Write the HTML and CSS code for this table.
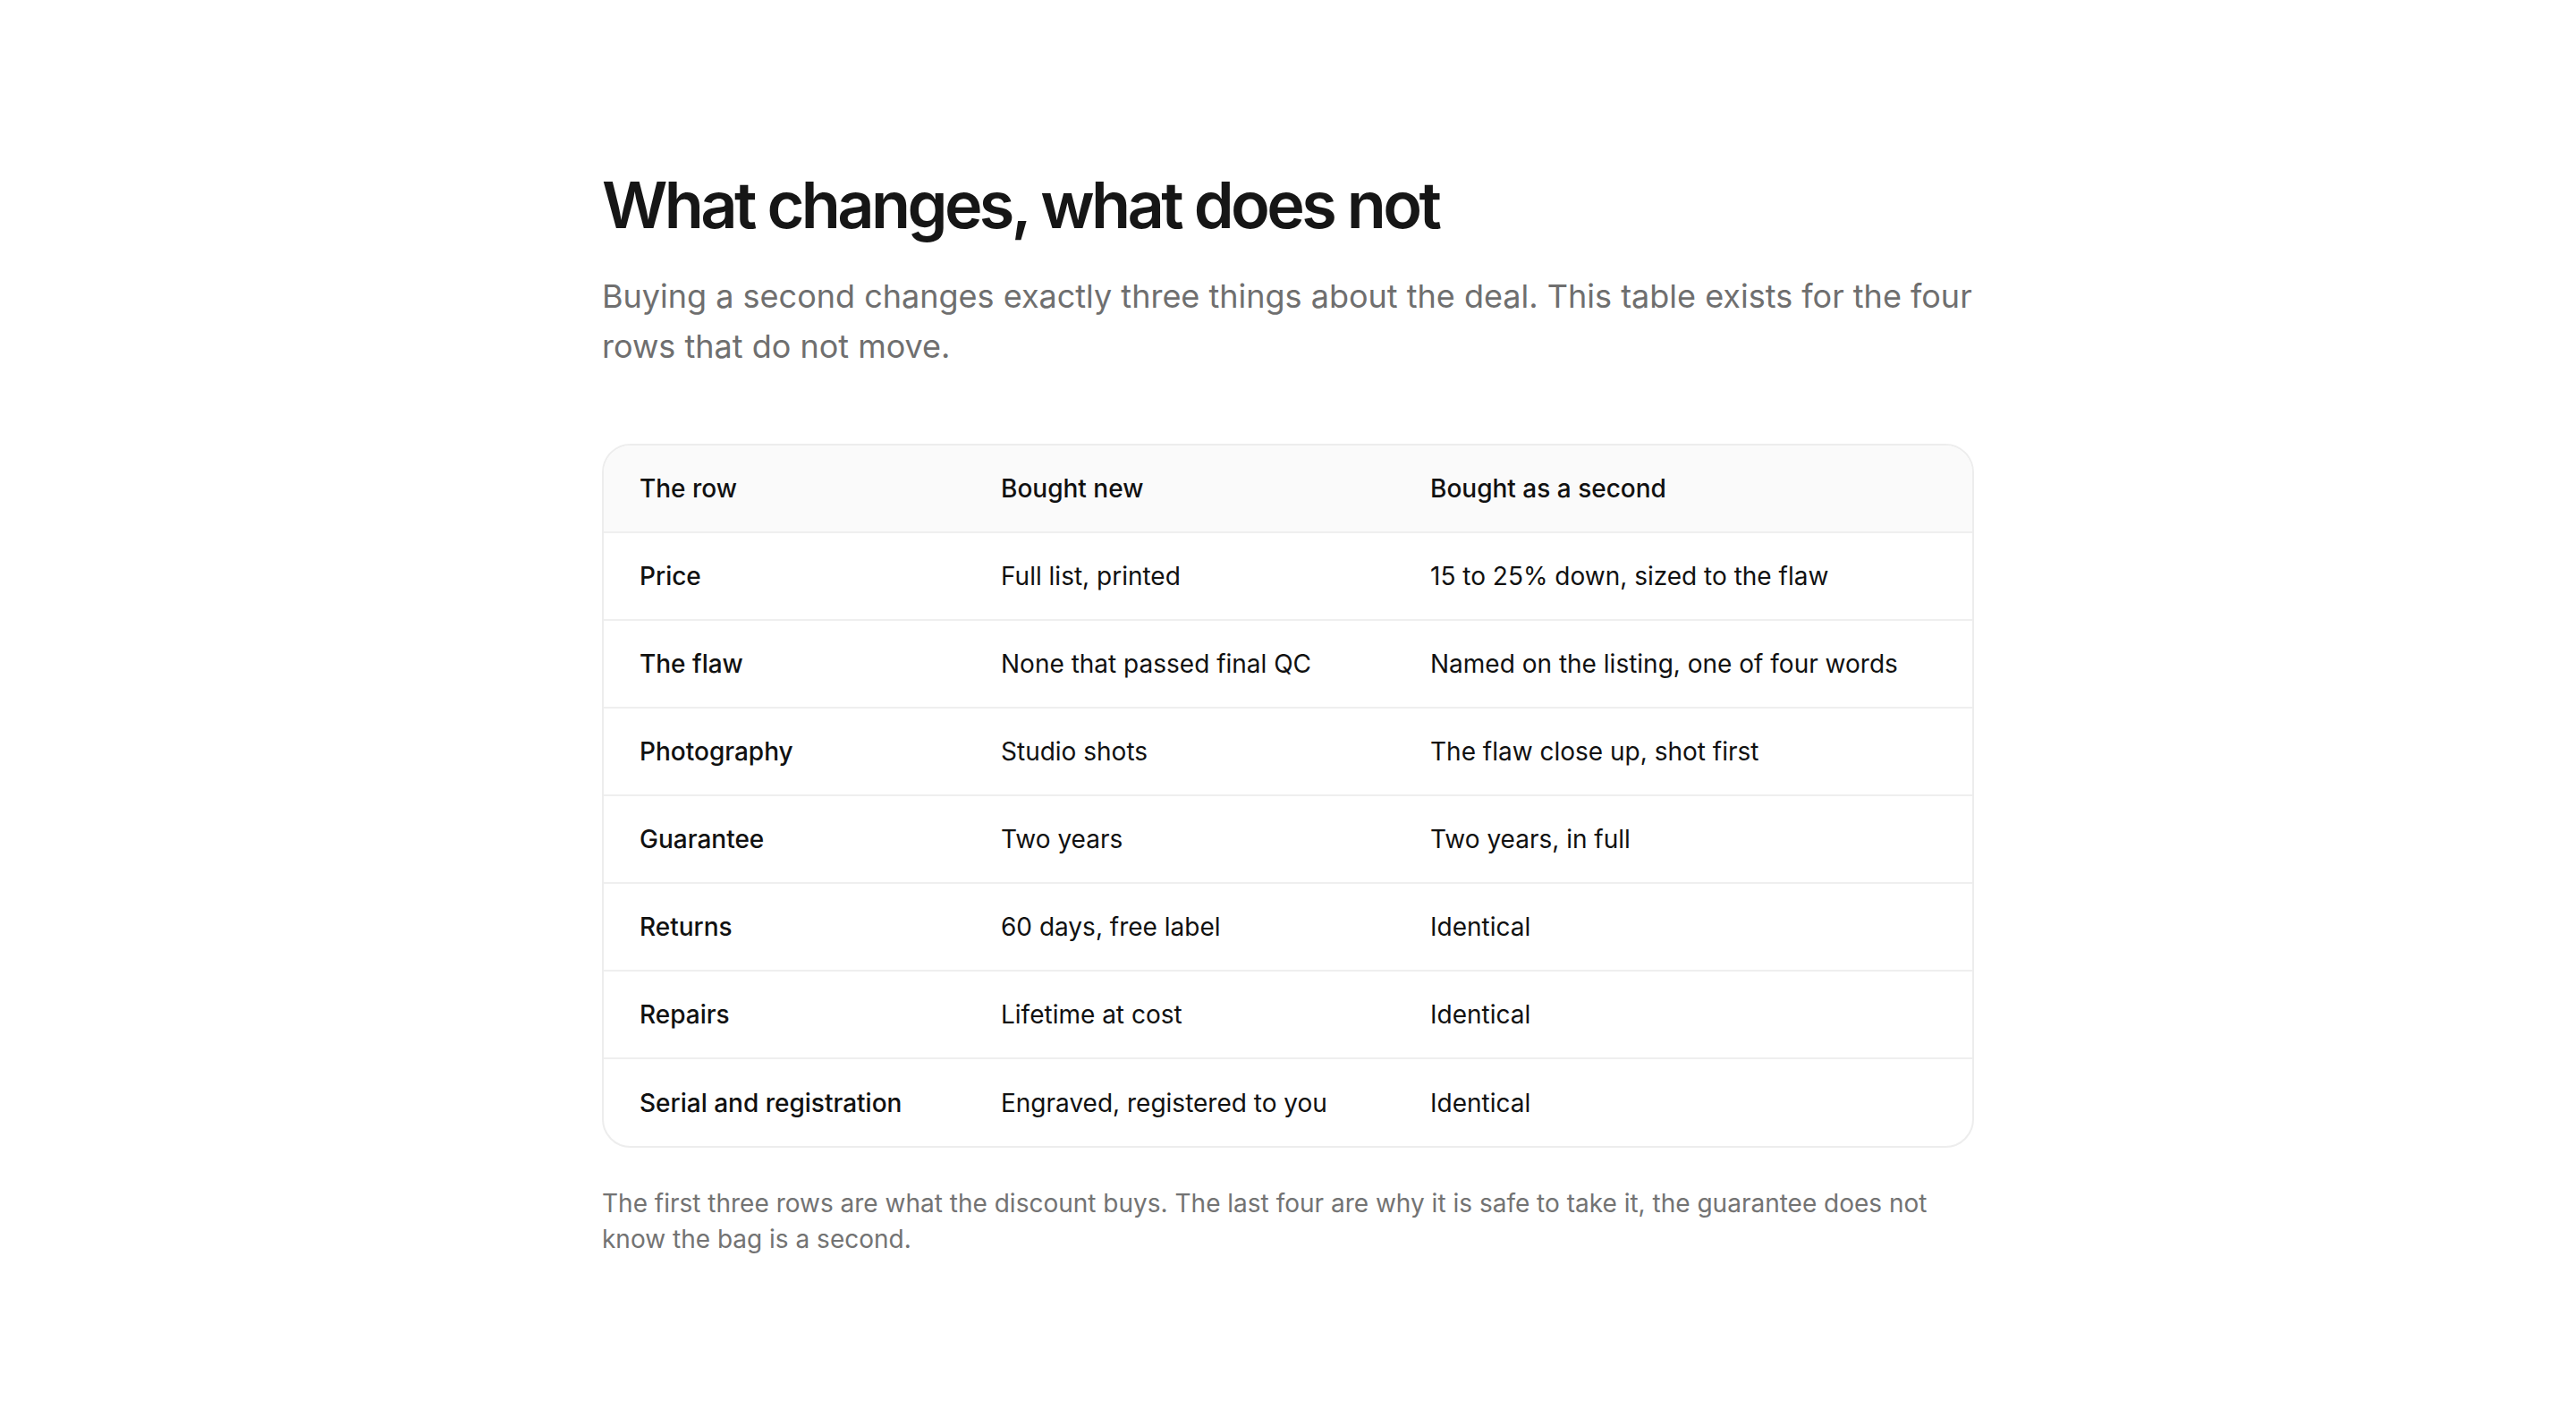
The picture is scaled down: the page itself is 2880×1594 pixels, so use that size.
FILE: index.html
```html
<!DOCTYPE html>
<html lang="en">
<head>
<meta charset="utf-8">
<title>What changes, what does not</title>
<link rel="stylesheet" href="styles.css">
</head>
<body>
<main class="page">
  <section class="section">
    <h1 class="title">What changes, what does not</h1>
    <p class="lede">Buying a second changes exactly three things about the deal. This table exists for the four rows that do not move.</p>
    <div class="table-wrap">
      <table class="compare">
        <colgroup>
          <col class="c1"><col class="c2"><col class="c3">
        </colgroup>
        <thead>
          <tr><th>The row</th><th>Bought new</th><th>Bought as a second</th></tr>
        </thead>
        <tbody>
          <tr><th>Price</th><td>Full list, printed</td><td>15 to 25% down, sized to the flaw</td></tr>
          <tr><th>The flaw</th><td>None that passed final QC</td><td>Named on the listing, one of four words</td></tr>
          <tr><th>Photography</th><td>Studio shots</td><td>The flaw close up, shot first</td></tr>
          <tr><th>Guarantee</th><td>Two years</td><td>Two years, in full</td></tr>
          <tr><th>Returns</th><td>60 days, free label</td><td>Identical</td></tr>
          <tr><th>Repairs</th><td>Lifetime at cost</td><td>Identical</td></tr>
          <tr><th>Serial and registration</th><td>Engraved, registered to you</td><td>Identical</td></tr>
        </tbody>
      </table>
    </div>
    <p class="note">The first three rows are what the discount buys. The last four are why it is safe to take it, the guarantee does not know the bag is a second.</p>
  </section>
</main>
</body>
</html>
```

FILE: styles.css
```css
* { box-sizing: border-box; }
html, body { margin: 0; padding: 0; background: #ffffff; }
body {
  font-family: Inter, "Noto Sans", "Liberation Sans", sans-serif;
  color: #111111;
}
.page {
  display: flex;
  justify-content: center;
  padding-top: 186px;
}
.section {
  width: 1534px;
  display: flex;
  flex-direction: column;
}
.title {
  margin: 0;
  font-size: 72px;
  font-weight: 600;
  letter-spacing: -0.05em;
  line-height: 1.2;
  color: #161616;
}
.lede {
  margin: 31px 0 0;
  font-size: 36px;
  line-height: 56px;
  color: #6f6f6f;
}
.table-wrap {
  margin-top: 81px;
  border: 2px solid #ededed;
  border-radius: 32px;
  overflow: hidden;
}
.compare {
  width: 100%;
  border-collapse: collapse;
  table-layout: fixed;
  font-size: 28px;
}
.c1 { width: 404px; }
.c2 { width: 480px; }
.c3 { width: auto; }
.compare th, .compare td {
  height: 98px;
  padding: 0 40px;
  text-align: left;
  vertical-align: middle;
  border-top: 2px solid #efefef;
  white-space: nowrap;
}
.compare thead th {
  border-top: 0;
  background: #fafafa;
  font-weight: 500;
  height: 97px;
}
.compare tbody th { font-weight: 500; }
.compare td { font-weight: 400; }
.note {
  margin: 42px 0 0;
  font-size: 28px;
  line-height: 40px;
  color: #737373;
}
```
